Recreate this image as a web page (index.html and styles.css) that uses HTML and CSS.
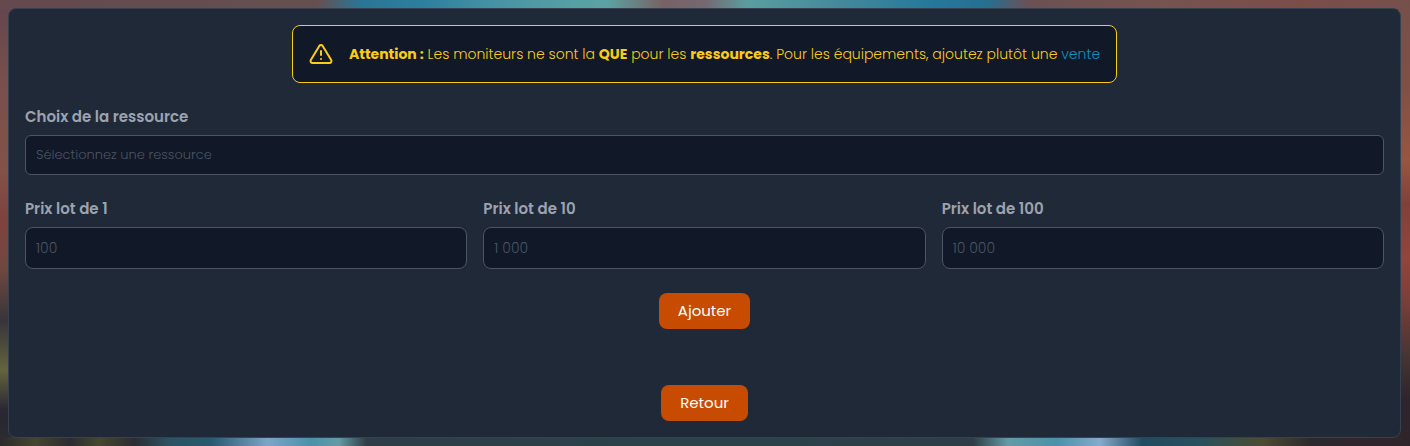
FILE: index.html
```html
<!DOCTYPE html>
<html lang="fr">
<head>
  <meta charset="utf-8">
  <meta name="viewport" content="width=device-width, initial-scale=1">
  <title>Ajouter un moniteur</title>
  <link rel="stylesheet" href="styles.css">
</head>
<body>
  <main class="card">
    <div class="alert" role="note">
      <svg class="alert-icon" viewBox="0 0 24 24" fill="none" stroke="currentColor" stroke-width="2" stroke-linecap="round" stroke-linejoin="round" aria-hidden="true">
        <path d="M10.3 3.9 1.8 18a2 2 0 0 0 1.7 3h17a2 2 0 0 0 1.7-3L13.7 3.9a2 2 0 0 0-3.4 0z"/>
        <path d="M12 9v4M12 17h.01"/>
      </svg>
      <p class="alert-text"><strong>Attention :</strong> Les moniteurs ne sont la <strong>QUE</strong> pour les <strong>ressources</strong>. Pour les équipements, ajoutez plutôt une <a class="link" href="#vente">vente</a></p>
    </div>
    <form class="form">
      <div class="field">
        <label class="label" for="resource">Choix de la ressource</label>
        <input class="input input-resource" id="resource" type="text" placeholder="Sélectionnez une ressource">
      </div>
      <div class="prices">
        <div class="field">
          <label class="label" for="price-1">Prix lot de 1</label>
          <input class="input" id="price-1" type="text" inputmode="numeric" placeholder="100">
        </div>
        <div class="field">
          <label class="label" for="price-10">Prix lot de 10</label>
          <input class="input" id="price-10" type="text" inputmode="numeric" placeholder="1 000">
        </div>
        <div class="field">
          <label class="label" for="price-100">Prix lot de 100</label>
          <input class="input" id="price-100" type="text" inputmode="numeric" placeholder="10 000">
        </div>
      </div>
      <button class="button" type="submit">Ajouter</button>
    </form>
    <button class="button" type="button">Retour</button>
  </main>
</body>
</html>
```
FILE: styles.css
```css
* {
  box-sizing: border-box;
}

body {
  margin: 0;
  padding: 8px 9px 8px 8px;
  font-family: Poppins, Inter, sans-serif;
  font-size: 14px;
  line-height: 20px;
  background-color: #2c3039;
  background-image:
    linear-gradient(90deg, #64494f 0, #66504f 22.5%, #2a7594 25.5%, #2d7f9f 30%, #4a96a5 36%, #5ba3a3 43%, #776264 47%, #756872 50%, #5a9e9f 53%, #42889b 60%, #25789b 66%, #266f91 70%, #6c5053 73%, #755450 82%, #7b4d49 92%, #75504b 100%),
    linear-gradient(90deg, #2b2b2e 0, #46452f 2.5%, #2b2c31 5%, #46482f 7%, #2b2d33 9.5%, #2c5362 12%, #285a70 15%, #7da5c8 19%, #4a91aa 22%, #649ba5 24%, #2e3d47 26%, #2b424b 45%, #2b424b 55%, #2e3d47 69%, #649ba5 71.5%, #4a91aa 75%, #86aacb 78%, #214b60 81%, #28505e 85%, #4d4c31 89.5%, #2c292d 93%, #30242a 100%),
    linear-gradient(180deg, #60464d 0, #784f4d 18%, #835246 38%, #80423f 49%, #704840 60%, #37353a 72%, #64643d 83%, #282733 92%, #2c2c2f 100%),
    linear-gradient(180deg, #75504c 0, #815045 20%, #985540 36%, #80403a 46%, #93453a 58%, #7c3f3a 67%, #493633 79%, #2d242c 90%, #30242a 100%);
  background-position: left top, left bottom, left top, right top;
  background-size: 100% 9px, 100% 9px, 12px 100%, 12px 100%;
  background-repeat: no-repeat;
}

.card {
  display: flex;
  flex-direction: column;
  align-items: center;
  padding: 16px;
  border: 1px solid #374151;
  border-radius: 8px;
  background: #1f2937;
}

.alert {
  display: flex;
  align-items: center;
  gap: 16px;
  padding: 16px;
  border: 1px solid #facc15;
  border-radius: 8px;
  background: #111827;
  color: #facc15;
}

.alert-icon {
  flex: none;
  width: 24px;
  height: 24px;
}

.alert-text {
  margin: 0;
  font-weight: 300;
  line-height: 24px;
}

.alert-text strong {
  font-weight: 700;
}

.link {
  color: #0e90c0;
  text-decoration: none;
}

.form {
  display: flex;
  flex-direction: column;
  align-items: center;
  gap: 24px;
  width: 100%;
  margin: 24px 0 56px;
}

.prices {
  display: grid;
  grid-template-columns: repeat(3, minmax(0, 1fr));
  gap: 16px;
  width: 100%;
}

.field {
  display: flex;
  flex-direction: column;
  gap: 8px;
  width: 100%;
}

.label {
  color: #9ca3af;
  font-weight: 600;
  font-size: 15px;
}

.input {
  width: 100%;
  height: 42px;
  padding: 0 10px;
  border: 1px solid #4b5563;
  border-radius: 8px;
  background: #111827;
  color: #d1d5db;
  font: inherit;
  font-weight: 300;
}

.input-resource {
  height: 40px;
  border-radius: 6px;
  font-size: 13px;
}

.input::placeholder {
  color: #4b5563;
  opacity: 1;
}

.button {
  height: 36px;
  padding: 0 19px;
  border: 0;
  border-radius: 8px;
  background: #c74b00;
  color: #ffffff;
  font: inherit;
  font-size: 15px;
}
```
